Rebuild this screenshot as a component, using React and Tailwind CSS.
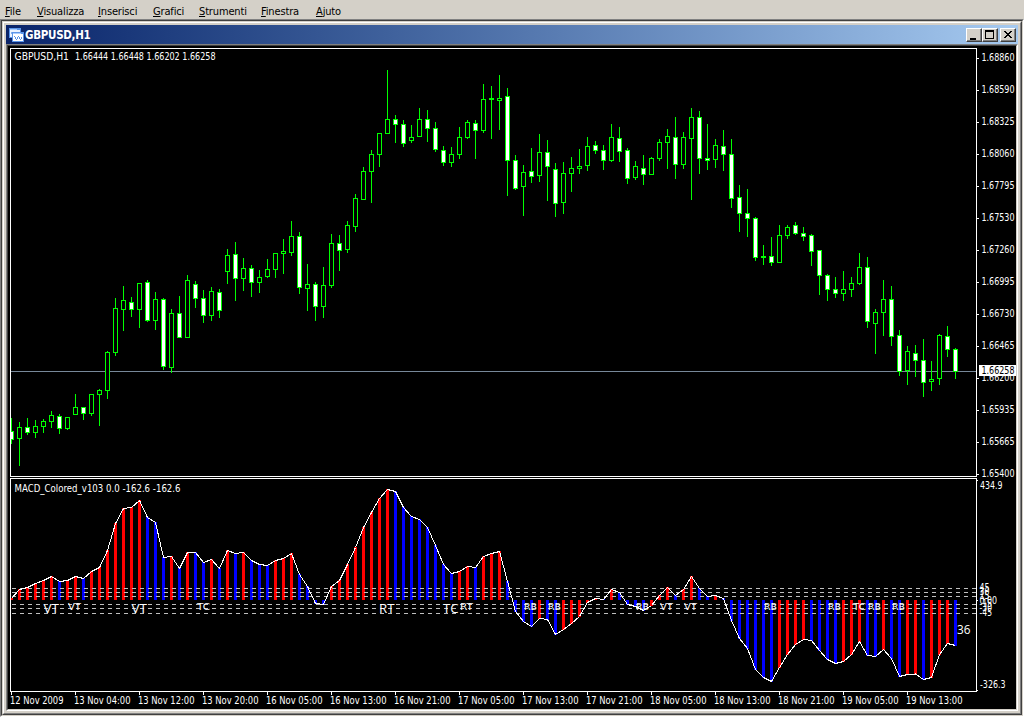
import React from "react";

const MENU = [
  { label: "File", width: "w-[32px]" },
  { label: "Visualizza", width: "w-[61px]" },
  { label: "Inserisci", width: "w-[55px]" },
  { label: "Grafici", width: "w-[46px]" },
  { label: "Strumenti", width: "w-[62px]" },
  { label: "Finestra", width: "w-[55px]" },
  { label: "Ajuto", width: "w-[40px]" },
];

const FIRST_X = 11;
const STEP = 8;
const barX = (i) => FIRST_X + i * STEP;

// [high, body top, body bottom, low, bearish]
const CANDLES = [
  [418, 431, 440, 444, 1], [422, 427, 439, 466, 0], [418, 427, 433, 435, 1], [420, 426, 433, 438, 0],
  [419, 421, 427, 433, 0], [411, 415, 422, 428, 0], [414, 416, 429, 434, 1], [417, 417, 429, 430, 0],
  [394, 407, 415, 415, 0], [407, 407, 414, 420, 1], [394, 394, 414, 416, 0], [389, 390, 395, 426, 0],
  [351, 352, 391, 399, 0], [298, 308, 353, 356, 0], [286, 300, 310, 331, 0], [297, 302, 310, 317, 1],
  [283, 283, 310, 328, 0], [280, 282, 321, 322, 1], [292, 299, 321, 330, 0], [298, 299, 367, 370, 1],
  [309, 313, 368, 373, 0], [296, 313, 338, 338, 1], [275, 280, 338, 338, 0], [281, 284, 299, 308, 1],
  [290, 298, 316, 323, 1], [287, 291, 316, 321, 0], [289, 292, 311, 318, 1], [249, 255, 272, 284, 0],
  [242, 254, 279, 301, 1], [258, 268, 279, 291, 0], [265, 268, 283, 297, 1], [270, 277, 283, 293, 0],
  [259, 269, 277, 278, 0], [253, 253, 270, 278, 0], [239, 251, 254, 274, 0], [221, 236, 253, 256, 0],
  [232, 236, 288, 294, 1], [264, 284, 289, 311, 0], [282, 284, 307, 321, 1], [267, 285, 307, 318, 0],
  [234, 243, 286, 288, 0], [235, 243, 251, 271, 1], [221, 225, 250, 253, 0], [194, 198, 227, 232, 0],
  [167, 171, 200, 200, 0], [150, 154, 172, 203, 0], [133, 133, 155, 167, 0], [70, 119, 134, 134, 0],
  [115, 119, 125, 143, 1], [120, 124, 144, 147, 1], [125, 137, 141, 143, 0], [108, 119, 137, 137, 0],
  [110, 119, 129, 142, 1], [122, 128, 150, 152, 1], [146, 150, 163, 166, 1], [147, 154, 163, 167, 0],
  [127, 137, 155, 159, 0], [120, 122, 138, 139, 0], [120, 123, 131, 159, 1], [84, 99, 131, 133, 0],
  [86, 98, 100, 139, 0], [75, 98, 101, 130, 0], [88, 96, 161, 196, 1], [155, 160, 189, 190, 1],
  [165, 172, 187, 216, 0], [148, 171, 177, 183, 1], [134, 152, 176, 182, 0], [140, 152, 167, 201, 1],
  [163, 169, 204, 217, 1], [162, 173, 203, 214, 0], [157, 168, 174, 192, 0], [149, 166, 169, 174, 0],
  [137, 146, 166, 171, 0], [141, 145, 151, 154, 1], [145, 150, 161, 170, 1], [124, 137, 161, 162, 0],
  [127, 138, 152, 162, 1], [148, 150, 179, 184, 1], [161, 166, 178, 180, 0], [155, 168, 175, 185, 1],
  [157, 158, 175, 175, 0], [139, 142, 159, 161, 0], [129, 136, 143, 169, 0], [117, 137, 165, 179, 1],
  [132, 137, 165, 169, 0], [108, 117, 139, 200, 0], [111, 117, 159, 174, 1], [124, 158, 161, 170, 1],
  [139, 145, 160, 168, 0], [130, 146, 155, 171, 1], [139, 154, 199, 208, 1], [185, 197, 214, 232, 1],
  [189, 213, 219, 237, 1], [217, 218, 258, 261, 1], [245, 256, 258, 265, 0], [237, 256, 263, 266, 1],
  [225, 235, 263, 263, 0], [225, 227, 236, 239, 0], [222, 225, 234, 235, 1], [227, 233, 237, 241, 1],
  [234, 235, 252, 266, 1], [250, 250, 276, 295, 1], [274, 275, 290, 301, 1], [277, 289, 294, 298, 1],
  [271, 289, 294, 301, 0], [277, 283, 290, 297, 0], [253, 267, 284, 285, 0], [257, 267, 322, 328, 1],
  [309, 312, 324, 354, 0], [280, 299, 313, 336, 0], [286, 299, 337, 346, 1], [330, 335, 372, 376, 1],
  [346, 351, 371, 385, 0], [345, 353, 361, 377, 1], [339, 360, 383, 397, 1], [361, 379, 382, 391, 0],
  [334, 335, 379, 385, 0], [326, 336, 350, 357, 1], [348, 349, 372, 379, 1],
];

const ZERO_Y = 600;
const MACD = [
  598, 589, 587, 583, 580, 576, 581, 580, 576, 578, 571, 567, 550, 523, 508, 507, 500, 517, 522, 557,
  556, 568, 552, 552, 562, 559, 568, 550, 553, 552, 560, 564, 565, 560, 558, 553, 574, 586, 603, 604,
  586, 580, 564, 547, 527, 512, 498, 489, 491, 507, 516, 519, 527, 545, 564, 573, 571, 566, 567, 556,
  553, 551, 581, 611, 621, 626, 618, 619, 634, 629, 623, 616, 602, 598, 599, 589, 592, 604, 606, 610,
  605, 595, 587, 595, 589, 576, 588, 596, 595, 598, 620, 638, 648, 669, 677, 681, 667, 654, 644, 639,
  640, 650, 659, 663, 661, 654, 641, 655, 656, 649, 658, 676, 674, 673.5, 679, 677, 654, 643, 645,
];

const LEVELS = [588, 592, 596, 604, 608, 613];

const PRICES = [
  "1.68860", "1.68590", "1.68325", "1.68060", "1.67795", "1.67530", "1.67260",
  "1.66995", "1.66730", "1.66465", "1.66200", "1.65935", "1.65665", "1.65400",
];

const DATES = [
  "12 Nov 2009", "13 Nov 04:00", "13 Nov 12:00", "13 Nov 20:00", "16 Nov 05:00",
  "16 Nov 13:00", "16 Nov 21:00", "17 Nov 05:00", "17 Nov 13:00", "17 Nov 21:00",
  "18 Nov 05:00", "18 Nov 13:00", "18 Nov 21:00", "19 Nov 05:00", "19 Nov 13:00",
];

// [x, text, large]
const SIGNALS = [
  [43.5, "VT", 1], [68, "VT", 0], [131.5, "VT", 1], [197, "TC", 0], [379, "RT", 1], [443, "TC", 1],
  [460, "RT", 0], [524, "RB", 0], [548, "RB", 0], [636, "RB", 0], [660, "VT", 0], [684, "VT", 0],
  [764, "RB", 0], [828, "RB", 0], [853, "TC", 0], [868, "RB", 0], [892, "RB", 0],
];

const LEVEL_LABELS = [
  ["45", 591, 10], ["30", 595, 10], ["15", 599, 10], ["0.00", 603.5, 17.5],
  ["-15", 607, 12.5], ["-30", 611, 12.5], ["-45", 616, 12.5],
];

function Label({ x, y, w, size = 10, fill = "#fff", className, children }) {
  return (
    <text
      x={x}
      y={y}
      fontSize={size}
      fill={fill}
      textLength={w}
      lengthAdjust="spacingAndGlyphs"
      className={className}
    >
      {children}
    </text>
  );
}

function Candle({ i, data }) {
  const [high, top, bottom, low, bearish] = data;
  const x = barX(i);
  return (
    <g>
      <rect x={x} y={high} width="1" height={low - high} fill="#0f0" />
      <rect x={x - 2} y={top} width="5" height={bottom - top} fill="#0f0" />
      {bottom - top > 2 && (
        <rect x={x - 1} y={top + 1} width="3" height={bottom - top - 2} fill={bearish ? "#fff" : "#000"} />
      )}
    </g>
  );
}

function PricePane() {
  return (
    <g>
      <rect x="11" y="371" width="966" height="1" fill="#778899" />
      <g clipPath="url(#plot)">
        {CANDLES.map((c, i) => (
          <Candle key={i} i={i} data={c} />
        ))}
      </g>
      <Label x={14.5} y={60} w={54.5}>GBPUSD,H1</Label>
      <Label x={75} y={60} w={140.5}>1.66444 1.66448 1.66202 1.66258</Label>
      {PRICES.map((p, i) => (
        <g key={p}>
          <rect x="977" y={58 + i * 32} width="2" height="1" fill="#fff" />
          <Label x={981.5} y={61 + i * 32} w={33}>{p}</Label>
        </g>
      ))}
      <rect x="979" y="365" width="37" height="11" fill="#fff" />
      <Label x={981.5} y={374} w={33} fill="#000">1.66258</Label>
    </g>
  );
}

function MacdPane() {
  const line = MACD.map((y, i) => `${barX(i) + 0.5},${y + 0.5}`).join(" ");
  return (
    <g>
      <g clipPath="url(#plot)">
        {MACD.map((v, i) => {
          const y = Math.round(v);
          const rising = i === 0 || v < MACD[i - 1];
          return (
            <rect
              key={i}
              x={barX(i) - 1}
              y={Math.min(y, ZERO_Y)}
              width="3"
              height={y < ZERO_Y ? ZERO_Y - y : y + 1 - ZERO_Y}
              fill={rising ? "#f00" : "#00f"}
            />
          );
        })}
      </g>
      {LEVELS.map((y) => (
        <line key={y} x1="12" x2="976" y1={y + 0.5} y2={y + 0.5} stroke="#c0c0c0" strokeDasharray="4 4" />
      ))}
      <polyline points={line} fill="none" stroke="#fff" strokeWidth="1" />
      {SIGNALS.map(([x, text, large]) =>
        large ? (
          <Label key={x} x={x} y={613} w={15.5} size={13} className="font-['Open_Sans','Noto_Sans',sans-serif]">
            {text}
          </Label>
        ) : (
          <Label key={x} x={x} y={610} w={13} size={9.5}>
            {text}
          </Label>
        )
      )}
      <Label x={957} y={634} w={13.5} size={12} className="font-['Open_Sans','Noto_Sans',sans-serif]">36</Label>
      <Label x={14.5} y={492} w={166}>MACD_Colored_v103 0.0 -162.6 -162.6</Label>
      <Label x={980} y={489} w={22.5}>434.9</Label>
      {LEVEL_LABELS.map(([t, y, w]) => (
        <Label key={t} x={979.5} y={y} w={w}>{t}</Label>
      ))}
      <Label x={980} y={688} w={25.5}>-326.3</Label>
    </g>
  );
}

function Chart() {
  return (
    <svg
      width="1008"
      height="663"
      viewBox="8 46 1008 663"
      shapeRendering="crispEdges"
      className="block bg-black font-['DejaVu_Sans',sans-serif]"
    >
      <clipPath id="plot">
        <rect x="11" y="49" width="965" height="642" />
      </clipPath>
      <PricePane />
      <MacdPane />
      {/* pane frames */}
      <g fill="#fff">
        <rect x="10" y="48" width="967" height="1" />
        <rect x="10" y="48" width="1" height="429" />
        <rect x="976" y="48" width="1" height="429" />
        <rect x="10" y="476" width="967" height="1" />
        <rect x="10" y="478" width="967" height="1" />
        <rect x="10" y="478" width="1" height="214" />
        <rect x="976" y="478" width="1" height="214" />
        <rect x="10" y="691" width="967" height="1" />
        <rect x="977" y="480" width="1" height="1" />
        <rect x="977" y="600" width="1" height="1" />
        <rect x="977" y="690" width="1" height="1" />
      </g>
      {DATES.map((d, i) => (
        <g key={d}>
          <rect x={11 + i * 64} y="692" width="1" height="3" fill="#fff" />
          <Label x={10 + i * 64} y={704} w={i === 0 ? 53.5 : 56.5}>{d}</Label>
        </g>
      ))}
    </svg>
  );
}

function ChartIcon() {
  return (
    <svg width="16" height="16" viewBox="0 0 16 16" shapeRendering="crispEdges" aria-hidden="true">
      <rect x="0" y="1" width="12" height="10" fill="#5b95e8" />
      <rect x="1" y="3" width="10" height="7" fill="#eaf3ff" />
      <rect x="1" y="2" width="7" height="1" fill="#a9ccff" />
      <path d="M1.5 7.5 3 5l2 3 1.500-3" fill="none" stroke="#7fb0f0" />
      <rect x="3" y="5" width="12" height="10" fill="#5b95e8" />
      <rect x="4" y="7" width="10" height="7" fill="#fff" />
      <rect x="4" y="6" width="8" height="1" fill="#a9ccff" />
      <path
        d="M5 9h1v1H5zM6 10h1v2H6zM7 12h1v1H7zM8 10h1v2H8zM9 9h1v1H9zM10 10h1v2h-1zM11 12h1v1h-1zM12 10h1v2h-1z"
        fill="#5b95e8"
      />
    </svg>
  );
}

function TitleButton({ label, children }) {
  return (
    <button
      type="button"
      aria-label={label}
      className="h-[14px] w-4 border border-t-white border-l-white border-r-[#404040] border-b-[#404040] bg-[#d4d0c8] shadow-[inset_-1px_-1px_0_#808080]"
    >
      <svg width="14" height="12" viewBox="0 0 14 12" shapeRendering="crispEdges" className="block">
        {children}
      </svg>
    </button>
  );
}

function TitleBar() {
  return (
    <div className="flex h-[19px] items-center bg-linear-to-r from-[#0a246a] to-[#a6caf0] pr-0.5 pl-[3px]">
      <ChartIcon />
      <span className="w-16 pt-px text-[11.5px] leading-[18px] font-bold tracking-[-0.3px] whitespace-nowrap text-white">
        GBPUSD,H1
      </span>
      <div className="ml-auto flex">
        <TitleButton label="Riduci a icona">
          <rect x="3" y="9" width="6" height="2" fill="#000" />
        </TitleButton>
        <TitleButton label="Ingrandisci">
          <path d="M2 1h9v9H2zM3 3v6h7V3z" fill="#000" fillRule="evenodd" />
        </TitleButton>
        <div className="w-0.5" />
        <TitleButton label="Chiudi">
          <path
            d="M3 2h2v1h1v1h2V3h1V2h2v1h-1v1H9v1H8v1h1v1h1v1h1v1H9V8H8V7H6v1H5v1H3V8h1V7h1V6h1V5H5V4H4V3H3z"
            fill="#000"
          />
        </TitleButton>
      </div>
    </div>
  );
}

export default function App() {
  return (
    <div className="flex h-[717px] w-[1024px] flex-col overflow-hidden bg-[#d4d0c8] font-['DejaVu_Sans_Condensed','DejaVu_Sans',sans-serif] text-black">
      <nav className="flex h-[19px] shrink-0 pt-[3px] pl-[5px] text-[11px] leading-[18px]">
        {MENU.map(({ label, width }) => (
          <span key={label} className={`${width} shrink-0 tracking-[-0.15px] whitespace-nowrap`}>
            <span className="underline underline-offset-1">{label[0]}</span>
            {label.slice(1)}
          </span>
        ))}
      </nav>

      {/* MDI client area */}
      <div className="flex-1 border border-t-[#808080] border-r-white border-b-white border-l-[#808080]">
        <div className="h-full border border-t-[#404040] border-r-[#d4d0c8] border-b-[#d4d0c8] border-l-[#404040]">
          <div className="h-full border border-t-[#d4d0c8] border-r-[#404040] border-b-[#404040] border-l-[#d4d0c8]">
            <div className="h-full border border-t-white border-r-[#808080] border-b-[#808080] border-l-white p-0.5">
              <TitleBar />
              <div className="border border-t-[#808080] border-r-white border-b-white border-l-[#808080]">
                <div className="border border-t-[#404040] border-r-[#d4d0c8] border-b-[#d4d0c8] border-l-[#404040]">
                  <Chart />
                </div>
              </div>
            </div>
          </div>
        </div>
      </div>
    </div>
  );
}
